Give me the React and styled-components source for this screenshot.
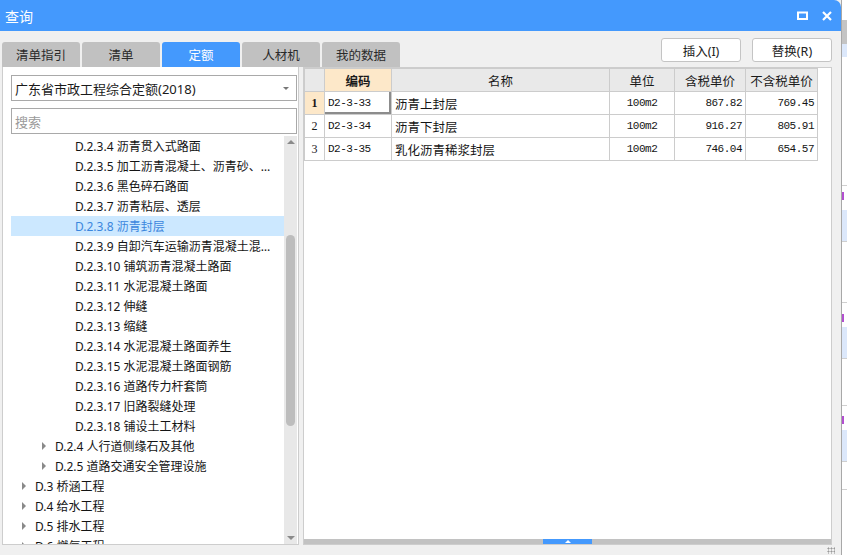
import styled, { createGlobalStyle } from "styled-components";

const GlobalStyle = createGlobalStyle`
  html, body { margin: 0; padding: 0; background: #ffffff; }
  body { font-family: "Noto Sans", "Noto Sans CJK SC", sans-serif; }
  * { box-sizing: border-box; }
`;

const CJK = `"Segoe UI", "Noto Sans", "Noto Sans CJK SC", sans-serif`;
const MONO = `"Liberation Mono", "Noto Sans CJK SC", monospace`;

const Screen = styled.div`
  width: 847px;
  height: 555px;
  display: flex;
  overflow: hidden;
`;

const Dialog = styled.div`
  width: 842px;
  height: 555px;
  display: flex;
  flex-direction: column;
  background: #f0f0f0;
  border-right: 1px solid #a8a8a8;
`;

const TitleBar = styled.div`
  height: 31px;
  flex-shrink: 0;
  background: #4499fd;
  border-top-right-radius: 7px;
  display: flex;
  align-items: center;
  justify-content: space-between;
  padding: 0 9px 0 5px;
  color: #fff;
  font-family: ${CJK};
  font-size: 14px;
`;

const TitleIcons = styled.div`
  display: flex;
  align-items: center;
  gap: 14px;
`;

const Toolbar = styled.div`
  height: 36px;
  flex-shrink: 0;
  display: flex;
  justify-content: space-between;
  padding: 0 9px 0 2px;
`;

const Tabs = styled.div`
  display: flex;
  align-items: flex-end;
  gap: 2px;
`;

const Tab = styled.div`
  width: 78px;
  height: 25px;
  border-radius: 3px 3px 0 0;
  background: ${(p) => (p.$active ? "#4499fd" : "#c1c1c1")};
  color: ${(p) => (p.$active ? "#ffffff" : "#2a2a2a")};
  font-family: ${CJK};
  font-size: 12.5px;
  display: flex;
  align-items: center;
  justify-content: center;
`;

const Buttons = styled.div`
  display: flex;
  gap: 11px;
  padding-top: 7px;
`;

const Button = styled.div`
  width: 80px;
  height: 24px;
  background: #ffffff;
  border: 1px solid #c4c4c4;
  border-radius: 3px;
  font-family: ${CJK};
  font-size: 12.5px;
  color: #222;
  display: flex;
  align-items: center;
  justify-content: center;
`;

const Content = styled.div`
  flex: 1;
  display: flex;
  gap: 4px;
  padding: 0 9px 10px 2px;
  min-height: 0;
`;

const LeftPanel = styled.div`
  width: 297px;
  background: #ffffff;
  border: 1px solid #cdcdcd;
  border-top: none;
  padding: 8px 1px 0 8px;
  display: flex;
  flex-direction: column;
  min-height: 0;
`;

const Select = styled.div`
  height: 26px;
  border: 1px solid #a9a9a9;
  display: flex;
  align-items: center;
  justify-content: space-between;
  padding: 0 7px 0 3px;
  font-family: ${CJK};
  font-size: 13px;
  color: #1a1a1a;
`;

const Caret = styled.span`
  width: 0;
  height: 0;
  border-left: 3px solid transparent;
  border-right: 3px solid transparent;
  border-top: 3px solid #777;
`;

const Search = styled.div`
  margin-top: 7px;
  height: 26px;
  border: 1px solid #a9a9a9;
  display: flex;
  align-items: center;
  padding-left: 3px;
  font-family: ${CJK};
  font-size: 13px;
  color: #9a9a9a;
`;

const Tree = styled.div`
  margin-top: 2px;
  flex: 1;
  display: flex;
  min-height: 0;
`;

const TreeList = styled.div`
  flex: 1;
  overflow: hidden;
  min-width: 0;
`;

const TreeRow = styled.div`
  height: 20px;
  display: flex;
  align-items: center;
  padding-left: ${(p) => p.$level * 20 + 4}px;
  padding-right: 10px;
  background: ${(p) => (p.$selected ? "#cce8ff" : "transparent")};
  color: ${(p) => (p.$selected ? "#3b86dd" : "#141414")};
  font-family: ${CJK};
  font-size: 12px;
  white-space: nowrap;
  position: relative;
`;

const RowText = styled.span`
  overflow: hidden;
  text-overflow: ellipsis;
`;

const Arrow = styled.span`
  position: absolute;
  left: ${(p) => p.$level * 20 - 9}px;
  top: 6px;
  width: 0;
  height: 0;
  border-top: 4px solid transparent;
  border-bottom: 4px solid transparent;
  border-left: 4px solid #8a8a8a;
`;

const VScroll = styled.div`
  width: 13px;
  background: #e8e8e8;
  display: flex;
  flex-direction: column;
  align-items: center;
  padding: 4px 0;
`;

const ScrollArrow = styled.span`
  width: 0;
  height: 0;
  border-left: 4px solid transparent;
  border-right: 4px solid transparent;
  ${(p) => (p.$up ? "border-bottom: 4px solid #8a8a8a;" : "border-top: 4px solid #8a8a8a;")}
`;

const ScrollTrack = styled.div`
  flex: 1;
  width: 100%;
  padding: 91px 2px 110px;
  display: flex;
`;

const Thumb = styled.div`
  flex: 1;
  border-radius: 5px;
  background: #bdbdbd;
`;

const RightPanel = styled.div`
  flex: 1;
  background: #ffffff;
  border: 1px solid #cdcdcd;
  display: flex;
  flex-direction: column;
  min-width: 0;
`;

const TableArea = styled.div`
  flex: 1;
`;

const Table = styled.table`
  border-collapse: collapse;
  table-layout: fixed;
  width: 513px;
`;

const Th = styled.th`
  height: 23px;
  padding: 0;
  background: ${(p) => (p.$hl ? "#fde8c9" : "#e9e9e9")};
  border: 1px solid #cccccc;
  font-family: ${CJK};
  font-size: 12.5px;
  font-weight: ${(p) => (p.$hl ? 700 : 400)};
  color: #1a1a1a;
  text-align: center;
`;

const Td = styled.td`
  height: 23px;
  padding: 0 3px;
  border: 1px solid #cccccc;
  font-family: ${(p) => (p.$mono ? MONO : CJK)};
  font-size: ${(p) => (p.$mono ? "11px" : "12.5px")};
  letter-spacing: ${(p) => (p.$mono ? "-0.5px" : "0")};
  color: #141414;
  text-align: ${(p) => p.$align || "left"};
  white-space: nowrap;
  ${(p) =>
    p.$active &&
    "border-left: 1px solid #3a8ee6; border-top: 1px solid #3a8ee6; box-shadow: inset -2px -2px 0 #8c8c8c;"}
`;

const NumCell = styled.td`
  height: 23px;
  padding: 0;
  border: 1px solid #cccccc;
  background: ${(p) => (p.$hl ? "#fde8c9" : "#ffffff")};
  font-family: "Liberation Serif", serif;
  font-size: 12px;
  font-weight: ${(p) => (p.$hl ? 700 : 400)};
  text-align: center;
  color: #1a1a1a;
`;

const HScroll = styled.div`
  height: 5px;
  background: #c2c2c2;
  display: flex;
  justify-content: center;
`;

const HThumb = styled.div`
  width: 49px;
  height: 5px;
  background: #4499fd;
  display: flex;
  align-items: center;
  justify-content: center;
`;

const TinyUp = styled.span`
  width: 0;
  height: 0;
  border-left: 3px solid transparent;
  border-right: 3px solid transparent;
  border-bottom: 3px solid #ffffff;
`;

const Grip = styled.div`
  position: absolute;
  right: 7px;
  bottom: 1px;
  width: 8px;
  height: 7px;
  background-image: radial-gradient(#9a9a9a 45%, transparent 50%);
  background-size: 3px 3px;
`;

const DialogWrap = styled.div`
  position: relative;
`;

const Backdrop = styled.div`
  width: 5px;
  display: flex;
  flex-direction: column;
  background: #ffffff;
`;

const Strip = styled.div`
  flex-shrink: 0;
  height: ${(p) => p.$h}px;
  background: ${(p) => p.$bg || "#ffffff"};
  border-bottom: ${(p) => (p.$line ? "1px solid #cfcfcf" : "none")};
  border-left: ${(p) => (p.$mark ? "2px solid #b24fd0" : "none")};
`;

const treeItems = [
  { level: 3, text: "D.2.3.4 沥青贯入式路面" },
  { level: 3, text: "D.2.3.5 加工沥青混凝土、沥青砂、沥青混合料" },
  { level: 3, text: "D.2.3.6 黑色碎石路面" },
  { level: 3, text: "D.2.3.7 沥青粘层、透层" },
  { level: 3, text: "D.2.3.8 沥青封层", selected: true },
  { level: 3, text: "D.2.3.9 自卸汽车运输沥青混凝土混合料" },
  { level: 3, text: "D.2.3.10 铺筑沥青混凝土路面" },
  { level: 3, text: "D.2.3.11 水泥混凝土路面" },
  { level: 3, text: "D.2.3.12 伸缝" },
  { level: 3, text: "D.2.3.13 缩缝" },
  { level: 3, text: "D.2.3.14 水泥混凝土路面养生" },
  { level: 3, text: "D.2.3.15 水泥混凝土路面钢筋" },
  { level: 3, text: "D.2.3.16 道路传力杆套筒" },
  { level: 3, text: "D.2.3.17 旧路裂缝处理" },
  { level: 3, text: "D.2.3.18 铺设土工材料" },
  { level: 2, text: "D.2.4 人行道侧缘石及其他", folder: true },
  { level: 2, text: "D.2.5 道路交通安全管理设施", folder: true },
  { level: 1, text: "D.3 桥涵工程", folder: true },
  { level: 1, text: "D.4 给水工程", folder: true },
  { level: 1, text: "D.5 排水工程", folder: true },
  { level: 1, text: "D.6 燃气工程", folder: true },
];

const rows = [
  { code: "D2-3-33", name: "沥青上封层", unit: "100m2", tax: "867.82", noTax: "769.45" },
  { code: "D2-3-34", name: "沥青下封层", unit: "100m2", tax: "916.27", noTax: "805.91" },
  { code: "D2-3-35", name: "乳化沥青稀浆封层", unit: "100m2", tax: "746.04", noTax: "654.57" },
];

const tabs = ["清单指引", "清单", "定额", "人材机", "我的数据"];

// the main window behind the dialog, only a sliver of it shows
const backdropStrips = [
  { h: 20 },
  { h: 24, bg: "#c4c4c4" },
  { h: 13, bg: "#dce8fb" },
  { h: 129, line: true },
  { h: 6 },
  { h: 8, mark: true },
  { h: 10 },
  { h: 32, bg: "#dce8fb", line: true },
  { h: 61, line: true },
  { h: 11 },
  { h: 8, mark: true },
  { h: 5 },
  { h: 32, bg: "#dce8fb", line: true },
  { h: 47, line: true },
  { h: 10 },
  { h: 8, mark: true },
  { h: 6 },
  { h: 32, bg: "#dce8fb", line: true },
  { h: 28, line: true },
  { h: 70 },
];

const App = () => {
  return (
    <Screen>
      <GlobalStyle />
      <DialogWrap>
        <Dialog>
          <TitleBar>
            <span>查询</span>
            <TitleIcons>
              <svg width="11" height="9" viewBox="0 0 11 9">
                <rect x="1" y="1.5" width="9" height="6.5" fill="none" stroke="#fff" strokeWidth="2" />
              </svg>
              <svg width="10" height="10" viewBox="0 0 10 10">
                <path d="M1 1 L9 9 M9 1 L1 9" stroke="#fff" strokeWidth="2.2" />
              </svg>
            </TitleIcons>
          </TitleBar>

          <Toolbar>
            <Tabs>
              {tabs.map((t) => (
                <Tab key={t} $active={t === "定额"}>{t}</Tab>
              ))}
            </Tabs>
            <Buttons>
              <Button>插入(I)</Button>
              <Button>替换(R)</Button>
            </Buttons>
          </Toolbar>

          <Content>
            <LeftPanel>
              <Select>
                <span>广东省市政工程综合定额(2018)</span>
                <Caret />
              </Select>
              <Search>搜索</Search>
              <Tree>
                <TreeList>
                  {treeItems.map((item) => (
                    <TreeRow key={item.text} $level={item.level} $selected={item.selected}>
                      {item.folder && <Arrow $level={item.level} />}
                      <RowText>{item.text}</RowText>
                    </TreeRow>
                  ))}
                </TreeList>
                <VScroll>
                  <ScrollArrow $up />
                  <ScrollTrack>
                    <Thumb />
                  </ScrollTrack>
                  <ScrollArrow />
                </VScroll>
              </Tree>
            </LeftPanel>

            <RightPanel>
              <TableArea>
                <Table>
                  <colgroup>
                    <col style={{ width: 20 }} />
                    <col style={{ width: 67 }} />
                    <col style={{ width: 218 }} />
                    <col style={{ width: 65 }} />
                    <col style={{ width: 71 }} />
                    <col style={{ width: 72 }} />
                  </colgroup>
                  <thead>
                    <tr>
                      <Th />
                      <Th $hl>编码</Th>
                      <Th>名称</Th>
                      <Th>单位</Th>
                      <Th>含税单价</Th>
                      <Th>不含税单价</Th>
                    </tr>
                  </thead>
                  <tbody>
                    {rows.map((r, i) => (
                      <tr key={r.code}>
                        <NumCell $hl={i === 0}>{i + 1}</NumCell>
                        <Td $mono $active={i === 0}>{r.code}</Td>
                        <Td>{r.name}</Td>
                        <Td $mono $align="center">{r.unit}</Td>
                        <Td $mono $align="right">{r.tax}</Td>
                        <Td $mono $align="right">{r.noTax}</Td>
                      </tr>
                    ))}
                  </tbody>
                </Table>
              </TableArea>
              <HScroll>
                <HThumb>
                  <TinyUp />
                </HThumb>
              </HScroll>
            </RightPanel>
          </Content>
        </Dialog>
        <Grip />
      </DialogWrap>

      <Backdrop>
        {backdropStrips.map((s, i) => (
          <Strip key={i} $h={s.h} $bg={s.bg} $line={s.line} $mark={s.mark} />
        ))}
      </Backdrop>
    </Screen>
  );
};

export default App;
